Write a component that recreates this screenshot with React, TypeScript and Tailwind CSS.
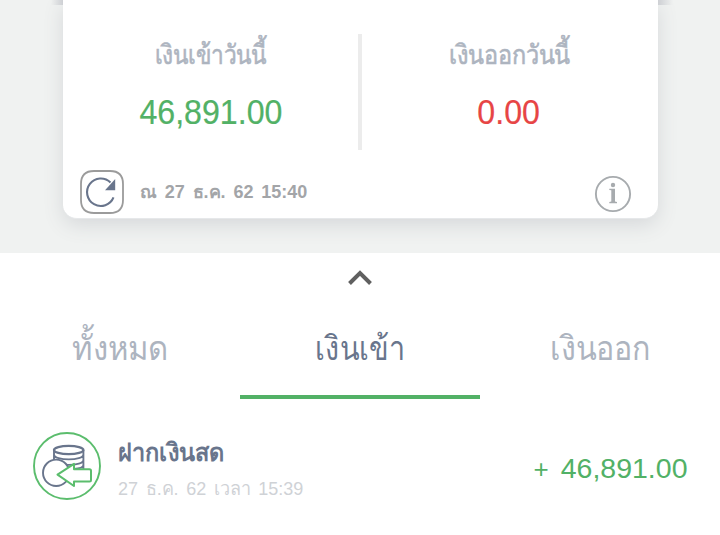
import type { ReactNode } from 'react';

function Amount({ children, className }: { children: ReactNode; className: string }) {
  return <div className={`scale-x-[0.93] text-[34.6px] leading-[40px] whitespace-nowrap [-webkit-text-stroke:0.2px_currentColor] ${className}`}>{children}</div>;
}

function Summary({ label, stretch, amount, color }: { label: string; stretch: string; amount: string; color: string }) {
  return (
    <div className="flex flex-1 flex-col items-center">
      <div className={`mt-[35px] h-[40px] text-[27px] leading-[40px] whitespace-nowrap text-[#adb4bf] [-webkit-text-stroke:0.6px_#adb4bf] ${stretch}`}>{label}</div>
      <Amount className={`mt-[17px] ${color}`}>{amount}</Amount>
    </div>
  );
}

function Tab({ label, stretch, active }: { label: string; stretch: string; active?: boolean }) {
  return (
    <button className={`flex h-[103px] w-[240px] justify-center border-b-4 pt-[32px] ${active ? 'border-[#52b166] text-[#69758c]' : 'border-transparent text-[#adb4bf]'}`}>
      <span className={`text-[34px] leading-[40px] whitespace-nowrap ${stretch}`}>{label}</span>
    </button>
  );
}

function RefreshIcon() {
  return (
    <svg width="44" height="44" viewBox="0 0 44 44" fill="none">
      <path d="M14 1H30Q43 1 43 14V30Q43 43 30 43H14Q1 43 1 30V14Q1 1 14 1z" stroke="#9b9b9b" strokeWidth="1.8" />
      <path d="M33.5 27.3A13.7 13.7 0 1 1 30.5 12.6" stroke="#69758c" strokeWidth="2.1" />
      <path d="M35.2 9V20.2H25z" fill="#69758c" />
    </svg>
  );
}

function InfoIcon() {
  return (
    <svg width="38" height="38" viewBox="0 0 38 38" fill="none">
      <circle cx="19" cy="19" r="17.1" stroke="#a7abae" strokeWidth="1.9" />
      <circle cx="19" cy="10" r="2.2" fill="#a7abae" />
      <path d="M15.3 13.7H21V26.6l2 .5V28.2H15.3v-1.1l2-.5V15.3l-2-.4z" fill="#a7abae" />
    </svg>
  );
}

function CashIcon() {
  return (
    <svg width="70" height="70" viewBox="0 0 70 70" fill="none">
      <circle cx="35" cy="34" r="33" fill="white" stroke="#5bbd6d" strokeWidth="1.9" />
      <g stroke="#69758c" strokeWidth="1.9">
        <ellipse cx="36.7" cy="18" rx="14.7" ry="4.2" strokeWidth="2.3" />
        <path d="M22 18v15M51.4 18v19M22 22.5c0 6.5 29.4 6.5 29.4 0M22 28c0 6.5 29.4 6.5 29.4 0M27 34.5c8 4 24.4 3 24.4-1.5" />
        <circle cx="24.2" cy="40.8" r="13.2" fill="white" />
      </g>
      <path d="M25.5 42.6L42 31.8V37.2H57.5Q59 37.2 59 38.7V48Q59 49.5 57.5 49.5H42V54z" fill="white" stroke="#5bbd6d" strokeWidth="2" strokeLinejoin="round" />
    </svg>
  );
}

export default function App() {
  return (
    <main className="h-[535px] w-[720px] overflow-hidden bg-white font-['Liberation_Sans',sans-serif]">
      <header className="relative h-[253px] overflow-hidden bg-[#f0f2f1] px-[63px]">
        <section className="relative h-[219px] w-[595px] rounded-b-[14px] border-b border-[#e6e8ea] bg-white shadow-[0_6px_20px_#d6d8da]">
          <div className="absolute top-0 left-[-12px] h-[5px] w-[12px] bg-linear-to-r from-transparent to-[#ced0d4]" />
          <div className="absolute top-0 right-[-15px] h-[5px] w-[15px] bg-linear-to-l from-transparent to-[#ced0d4]" />
          <div className="flex h-[150px]">
            <Summary label="เงินเข้าวันนี้" stretch="scale-x-[0.84]" amount="46,891.00" color="text-[#52b166]" />
            <div className="mt-[34px] h-[116px] w-[4px] bg-[#ececec]" />
            <div className="flex w-[296px] pr-[2px]">
              <Summary label="เงินออกวันนี้" stretch="scale-x-[0.87]" amount="0.00" color="text-[#e74545]" />
            </div>
          </div>
          <div className="flex h-[69px] pt-[20px] pr-[26px] pl-[17px]">
            <RefreshIcon />
            <p className="ml-[16px] flex-1 text-[18px] leading-[44px] font-bold [word-spacing:2.8px] whitespace-nowrap text-[#a3a5a8]">ณ 27 ธ.ค. 62 15:40</p>
            <div className="mt-[5px]"><InfoIcon /></div>
          </div>
        </section>
      </header>
      <div className="flex h-[43px] justify-center pt-[17px]">
        <svg width="24" height="16" viewBox="0 0 24 16" fill="none"><path d="M1.5 13.5L12 3l10.5 10.5" stroke="#606060" strokeWidth="4" /></svg>
      </div>
      <nav className="flex">
        <Tab label="ทั้งหมด" stretch="scale-x-[0.915]" />
        <Tab label="เงินเข้า" stretch="scale-x-[0.845]" active />
        <Tab label="เงินออก" stretch="scale-x-[0.895]" />
      </nav>
      <article className="flex h-[136px] pt-[33px] pr-[32.5px] pl-[32px]">
        <CashIcon />
        <div className="ml-[16px] flex-1">
          <h2 className="h-[40px] origin-left scale-x-[0.94] text-[25px] leading-[40px] font-bold whitespace-nowrap text-[#69758c]">ฝากเงินสด</h2>
          <p className="h-[30px] origin-left scale-x-[0.974] text-[18.5px] leading-[33px] [word-spacing:3px] whitespace-nowrap text-[#cfd2d6]">27 ธ.ค. 62 เวลา 15:39</p>
        </div>
        <p className="mt-[16px] text-[28.5px] leading-[40px] [word-spacing:4px] whitespace-nowrap text-[#52b166]"><span className="text-[26px]">+</span> 46,891.00</p>
      </article>
    </main>
  );
}
